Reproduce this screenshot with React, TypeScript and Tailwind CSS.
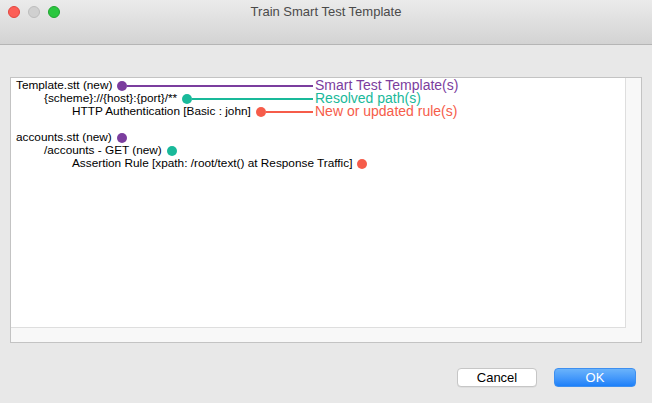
import React from "react";

type Row = {
  text: string;
  indent: number;
  dot: string;
  legend?: { label: string; color: string };
};

const PURPLE = "#7b3d9e";
const TEAL = "#19b99a";
const RED = "#f65c4a";

const group1: Row[] = [
  { text: "Template.stt (new)", indent: 0, dot: PURPLE, legend: { label: "Smart Test Template(s)", color: PURPLE } },
  { text: "{scheme}://{host}:{port}/**", indent: 1, dot: TEAL, legend: { label: "Resolved path(s)", color: TEAL } },
  { text: "HTTP Authentication [Basic : john]", indent: 2, dot: RED, legend: { label: "New or updated rule(s)", color: RED } },
];

const group2: Row[] = [
  { text: "accounts.stt (new)", indent: 0, dot: PURPLE },
  { text: "/accounts - GET (new)", indent: 1, dot: TEAL },
  { text: "Assertion Rule [xpath: /root/text() at Response Traffic]", indent: 2, dot: RED },
];

const indentClass = ["pl-0", "pl-[28px]", "pl-[56px]"];

function TreeRow({ row }: { row: Row }) {
  if (row.legend) {
    return (
      <div className="flex items-center h-[13px]">
        <div className={`flex items-center w-[297px] ${indentClass[row.indent]}`}>
          <span className="whitespace-nowrap">{row.text}</span>
          <span
            className="ml-[5px] w-[10px] h-[10px] rounded-full shrink-0"
            style={{ backgroundColor: row.dot }}
          />
          <span className="flex-1 h-[2px]" style={{ backgroundColor: row.dot }} />
        </div>
        <span
          className="ml-[2px] text-[14px] leading-[13px] whitespace-nowrap"
          style={{ color: row.legend.color }}
        >
          {row.legend.label}
        </span>
      </div>
    );
  }
  return (
    <div className={`flex items-center h-[13px] ${indentClass[row.indent]}`}>
      <span className="whitespace-nowrap">{row.text}</span>
      <span
        className="ml-[5px] w-[10px] h-[10px] rounded-full shrink-0"
        style={{ backgroundColor: row.dot }}
      />
    </div>
  );
}

export default function App() {
  return (
    <div
      className="w-[652px] h-[403px] bg-[#e8e8e8] flex flex-col overflow-hidden"
      style={{ fontFamily: '"Liberation Sans", Arial, sans-serif' }}
    >
      {/* Title bar */}
      <div className="relative h-[45px] shrink-0 bg-gradient-to-b from-[#ebebeb] to-[#d3d3d3] border-b border-[#b5b5b5] flex items-start">
        <div className="flex items-center gap-[8px] pl-[8px] pt-[6px]">
          <span className="w-[12px] h-[12px] rounded-full bg-[#fc5f57] border border-[#e2463f]" />
          <span className="w-[12px] h-[12px] rounded-full bg-[#d0d0d0] border border-[#bdbdbd]" />
          <span className="w-[12px] h-[12px] rounded-full bg-[#2ac73f] border border-[#1fa530]" />
        </div>
        <div className="absolute left-0 right-0 top-[2px] text-center text-[13px] text-[#4a4a4a]">
          Train Smart Test Template
        </div>
      </div>

      {/* Content */}
      <div className="flex-1 flex flex-col px-[10px] pt-[32px]">
        <div className="h-[266px] border border-[#c3c3c3] bg-[#f8f8f8] pr-[15px] pb-[14px] flex">
          <div className="flex-1 bg-white border-r border-b border-[#dedede] pl-[5px] pt-[1px] text-[11.8px] leading-[13px] text-black">
            {group1.map((r, i) => (
              <TreeRow key={`a${i}`} row={r} />
            ))}
            <div className="h-[13px]" />
            {group2.map((r, i) => (
              <TreeRow key={`b${i}`} row={r} />
            ))}
          </div>
        </div>

        <div className="flex justify-end gap-[17px] pt-[25px] pr-[6px]">
          <button className="w-[80px] h-[19px] rounded-[4px] bg-white border border-[#c6c6c6] text-[13px] leading-[17px] text-black shadow-[0_0.5px_0.5px_rgba(0,0,0,0.08)]">
            Cancel
          </button>
          <button className="w-[82px] h-[19px] rounded-[4px] bg-gradient-to-b from-[#6ab3fb] to-[#1c80f9] border border-[#3d8ff0] text-[13px] leading-[17px] text-white">
            OK
          </button>
        </div>
      </div>
    </div>
  );
}
